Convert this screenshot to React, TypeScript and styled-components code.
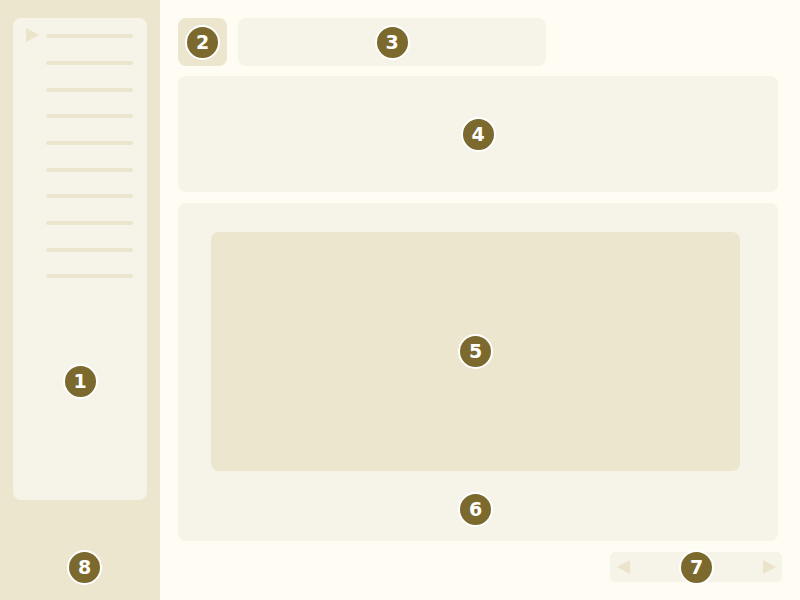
import React from "react";
import styled, { createGlobalStyle } from "styled-components";

const GlobalStyle = createGlobalStyle`
  html, body { margin: 0; padding: 0; }
  body { font-family: "DejaVu Sans", sans-serif; background: #fffcf4; }
`;

const Page = styled.div`
  display: flex;
  width: 800px;
  height: 600px;
  overflow: hidden;
  background: #fffcf4;
`;

const Sidebar = styled.aside`
  width: 160px;
  flex: none;
  background: #ede6cf;
  display: flex;
  flex-direction: column;
  padding: 18px 13px 0;
  box-sizing: border-box;
`;

const SidePanel = styled.div`
  height: 482px;
  background: #f6f3e8;
  border-radius: 8px;
  display: flex;
  flex-direction: column;
  align-items: stretch;
  padding-top: 5px;
  box-sizing: border-box;
`;

const NavRow = styled.div`
  height: 26.67px;
  display: flex;
  align-items: center;
  padding-left: 13px;
  gap: 7px;
`;

const Arrow = styled.span<{ $show: boolean }>`
  width: 0;
  height: 0;
  border-top: 7px solid transparent;
  border-bottom: 7px solid transparent;
  border-left: 13px solid ${(p) => (p.$show ? "#ebe4cb" : "transparent")};
  margin-top: -2px;
`;

const NavLine = styled.span`
  width: 87px;
  height: 4px;
  border-radius: 2px;
  background: #ece5cd;
`;

const Badge = styled.div`
  width: 31px;
  height: 31px;
  border-radius: 50%;
  background: #7c692d;
  border: 2px solid #ffffff;
  color: #ffffff;
  font-family: "DejaVu Sans", sans-serif;
  font-weight: bold;
  font-size: 19px;
  line-height: 1;
  display: flex;
  align-items: center;
  justify-content: center;
  flex: none;
`;

const PanelBadgeWrap = styled.div`
  display: flex;
  justify-content: center;
  margin-top: 74px;
`;

const SideFooter = styled.div`
  flex: 1;
  display: flex;
  align-items: flex-start;
  padding-top: 50px;
  padding-left: 54px;
`;

const Main = styled.main`
  flex: 1;
  display: flex;
  flex-direction: column;
  padding: 18px 18px 0 18px;
  box-sizing: border-box;
`;

const TopRow = styled.div`
  display: flex;
  gap: 11px;
  height: 48px;
`;

const Box = styled.div<{ $w?: number; $h: number; $dark?: boolean; $mt?: number }>`
  width: ${(p) => (p.$w ? `${p.$w}px` : "auto")};
  height: ${(p) => p.$h}px;
  margin-top: ${(p) => p.$mt ?? 0}px;
  background: ${(p) => (p.$dark ? "#ede6cf" : "#f6f3e8")};
  border-radius: 8px;
  display: flex;
  align-items: center;
  justify-content: center;
  flex: none;
  box-sizing: border-box;
`;

const Content = styled.section`
  width: 600px;
  height: 338px;
  margin-top: 11px;
  background: #f6f3e8;
  border-radius: 8px;
  display: flex;
  flex-direction: column;
  padding: 29px 38px 0 33px;
  box-sizing: border-box;
`;

const Inner = styled.div`
  height: 239px;
  background: #ede6cf;
  border-radius: 8px;
  display: flex;
  align-items: center;
  justify-content: center;
`;

const ContentFooter = styled.div`
  display: flex;
  justify-content: center;
  margin-top: 21px;
`;

const Pager = styled.div`
  align-self: flex-end;
  margin-top: 11px;
  width: 172px;
  height: 30px;
  background: #f6f3e8;
  border-radius: 5px;
  display: flex;
  align-items: center;
  justify-content: space-between;
  padding: 0 6px 0 7px;
  box-sizing: border-box;
`;

const PagerArrow = styled.span<{ $dir: "left" | "right" }>`
  width: 0;
  height: 0;
  border-top: 7.5px solid transparent;
  border-bottom: 7.5px solid transparent;
  ${(p) =>
    p.$dir === "left"
      ? "border-right: 13px solid #ebe4cb;"
      : "border-left: 13px solid #ebe4cb;"}
`;

export default function App() {
  const rows = Array.from({ length: 10 }, (_, i) => i);
  return (
    <>
      <GlobalStyle />
      <Page>
        <Sidebar>
          <SidePanel>
            {rows.map((i) => (
              <NavRow key={i}>
                <Arrow $show={i === 0} />
                <NavLine />
              </NavRow>
            ))}
            <PanelBadgeWrap>
              <Badge>1</Badge>
            </PanelBadgeWrap>
          </SidePanel>
          <SideFooter>
            <Badge>8</Badge>
          </SideFooter>
        </Sidebar>
        <Main>
          <TopRow>
            <Box $w={49} $h={48} $dark>
              <Badge>2</Badge>
            </Box>
            <Box $w={308} $h={48}>
              <Badge>3</Badge>
            </Box>
          </TopRow>
          <Box $w={600} $h={116} $mt={10}>
            <Badge>4</Badge>
          </Box>
          <Content>
            <Inner>
              <Badge>5</Badge>
            </Inner>
            <ContentFooter>
              <Badge>6</Badge>
            </ContentFooter>
          </Content>
          <Pager>
            <PagerArrow $dir="left" />
            <Badge>7</Badge>
            <PagerArrow $dir="right" />
          </Pager>
        </Main>
      </Page>
    </>
  );
}
